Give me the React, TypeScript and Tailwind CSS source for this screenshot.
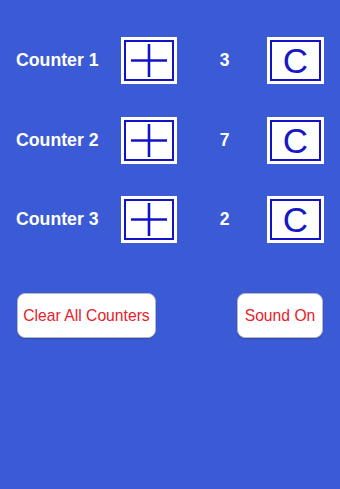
import React from "react";

function PlusBtn() {
  return (
    <div className="w-[56px] h-[47px] bg-white p-[3px]">
      <div className="w-full h-full border-2 border-[#1212c6] bg-white flex items-center justify-center">
        <svg width="36" height="33" viewBox="0 0 36 33">
          <line x1="0" y1="16.5" x2="36" y2="16.5" stroke="#1212c6" strokeWidth="2.6" />
          <line x1="18" y1="0" x2="18" y2="33" stroke="#1212c6" strokeWidth="2.6" />
        </svg>
      </div>
    </div>
  );
}

function CBtn() {
  return (
    <div className="w-[57px] h-[47px] bg-white p-[3px]">
      <div className="w-full h-full border-2 border-[#1212c6] bg-white flex items-center justify-center">
        <span className="text-[35px] leading-none text-[#1818c4] font-['Liberation_Sans',Arial,sans-serif]">
          C
        </span>
      </div>
    </div>
  );
}

export default function App() {
  const rows = [
    { label: "Counter 1", value: 3 },
    { label: "Counter 2", value: 7 },
    { label: "Counter 3", value: 2 },
  ];
  return (
    <div className="w-[340px] h-[489px] bg-[#3b5bd6] font-['Liberation_Sans',Arial,sans-serif] flex flex-col pt-[37px]">
      <div className="flex flex-col gap-[32.5px]">
        {rows.map((r) => (
          <div key={r.label} className="flex items-center h-[47px] pl-[16px]">
            <div className="w-[105px] text-white font-bold text-[17.7px]">{r.label}</div>
            <PlusBtn />
            <div className="w-[90px] text-white font-bold text-[17.5px] text-center pl-[5px]">{r.value}</div>
            <CBtn />
          </div>
        ))}
      </div>
      <div className="flex items-center mt-[50px] pl-[17px]">
        <button className="w-[139px] h-[45px] bg-white rounded-[8px] border border-[#b8b8c0] shadow-[0_1px_1px_rgba(0,0,0,0.2)] text-[#e8202a] text-[15.7px] flex items-center justify-center">
          Clear All Counters
        </button>
        <div className="w-[81px]" />
        <button className="w-[86px] h-[45px] bg-white rounded-[8px] border border-[#b8b8c0] shadow-[0_1px_1px_rgba(0,0,0,0.2)] text-[#e8202a] text-[15.7px] flex items-center justify-center">
          Sound On
        </button>
      </div>
    </div>
  );
}
